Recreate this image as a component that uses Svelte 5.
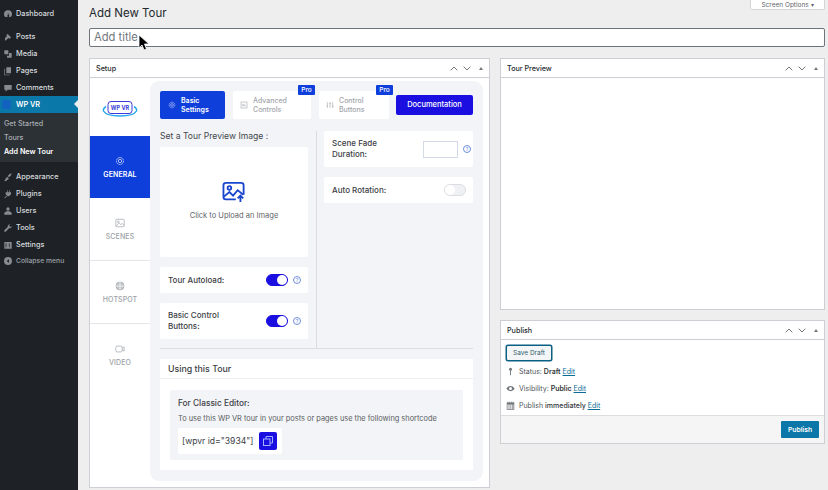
<script>
  const top = [
    { label: 'Posts', icon: 'M3 9l3-3-1-2 2-1 5 5-2 2-2-1-3 3-2 1z' },
    { label: 'Media', icon: 'M2 2h6v6H2zM9 6h4v7H6v-3h3z' },
    { label: 'Pages', icon: 'M5 2h7v9H5zM3 4v9h7v1H2V4z' },
    { label: 'Comments', icon: 'M2 3h11v7H7l-3 3v-3H2z' }
  ];
  const bottom = [
    { label: 'Appearance', icon: 'M2 13l4-6 3 3-5 4zM7 6l3-3 3-1-1 3-3 3z' },
    { label: 'Plugins', icon: 'M6 2h1v3h2V2h1v3h2v3l-3 3H7L4 8V5h2zM2 13l3-3 1 1-3 3z' },
    { label: 'Users', icon: 'M7.5 2a2.5 2.5 0 110 5 2.5 2.5 0 010-5zM2 13v-3l3-2h5l3 2v3z' },
    { label: 'Tools', icon: 'M13 4l-2 2-2-2 2-2a3.5 3.5 0 00-4 4L2 11v2h2l5-5a3.5 3.5 0 004-4z' },
    { label: 'Settings', icon: 'M2 3h11v10H2zM4 5v6h1V8h1V7H5V5zM9 5v2H8v1h1v3h1V5z' }
  ];
</script>

<div class="page">
  <nav class="menu">
    <a class="item first"><svg viewBox="0 0 15 15"><path d="M7.5 2a6 6 0 00-6 6c0 2 1 3.500 2 4h8c1-.5 2-2 2-4a6 6 0 00-6-6zm0 3.500L9 9.500a1.500 1.500 0 11-2 0z"/></svg>Dashboard</a>
    <div class="group">
      {#each top as m}
        <a class="item"><svg viewBox="0 0 15 15"><path d={m.icon}/></svg>{m.label}</a>
      {/each}
    </div>
    <a class="item current"><span class="vr-mark"></span>WP VR</a>
    <div class="sub">
      <a>Get Started</a>
      <a>Tours</a>
      <a class="on">Add New Tour</a>
    </div>
    <div class="group lower">
      {#each bottom as m}
        <a class="item"><svg viewBox="0 0 15 15"><path d={m.icon}/></svg>{m.label}</a>
      {/each}
    </div>
    <a class="item collapse"><svg viewBox="0 0 15 15"><path fill-rule="evenodd" d="M7.500 1.500a6 6 0 110 12 6 6 0 010-12zM9 5L5.500 7.500 9 10z"/></svg>Collapse menu</a>
  </nav>

  <main class="main">
    <div class="screen-tab">Screen Options <i>▾</i></div>
    <h1>Add New Tour</h1>
    <div class="title-input">Add title</div>

    <div class="cols">
      <section class="box setup">
        <header class="box-head"><b>Setup</b>
          <span class="ctrls">
            <svg viewBox="0 0 8 5"><path d="M.7 4.300L4 1l3.300 3.300"/></svg>
            <svg viewBox="0 0 8 5"><path d="M.7.7L4 4 7.300.7"/></svg>
            <em></em>
          </span>
        </header>
        <div class="setup-body">
          <aside class="side">
            <div class="logo">
              <svg viewBox="0 0 36 18" width="36" height="18">
                <path d="M4 6.500C1.500 8 1 9.500 1.500 11c2 3.500 9 5 16.500 5s14.500-1.500 16.500-5c.5-1.500 0-3-2.500-4.500" fill="none" stroke="#29a6ea" stroke-width="1.500"/>
                <rect x="6" y="1.500" width="24" height="12" rx="3" fill="#fff" stroke="#3a3ad8" stroke-width="1"/>
                <text x="18" y="10" text-anchor="middle" class="logo-t">WP VR</text>
              </svg>
            </div>
            <div class="tab active">
              <svg viewBox="0 0 12 12"><circle cx="6" cy="6" r="2"/><circle cx="6" cy="6" r="4.200" stroke-dasharray="2.200 .6"/></svg>
              GENERAL
            </div>
            <div class="tab">
              <svg viewBox="0 0 12 12"><rect x="1" y="1.500" width="10" height="9" rx="1"/><circle cx="4" cy="4.500" r="1"/><path d="M1.500 9.500L5 6l2 2 1.500-1.500L11 9"/></svg>
              SCENES
            </div>
            <div class="tab">
              <svg class="hot" viewBox="0 0 12 12"><circle cx="6" cy="6" r="4.800"/><circle class="hole" cx="6" cy="6" r="1.300"/><path class="hole" d="M6 1.200v2.500M6 8.300v2.500M1.200 6h2.500M8.300 6h2.500"/></svg>
              HOTSPOT
            </div>
            <div class="tab last">
              <svg viewBox="0 0 12 12"><rect x="1" y="2.500" width="7.500" height="7" rx="1.500"/><path d="M8.500 5L11 3.500v5L8.500 7"/></svg>
              VIDEO
            </div>
          </aside>

          <div class="panel">
            <div class="tabs">
              <div class="pill blue">
                <svg viewBox="0 0 12 12"><circle cx="6" cy="6" r="2"/><circle cx="6" cy="6" r="4.200" stroke-dasharray="2.200 .6"/></svg>
                <span>Basic<br />Settings</span>
              </div>
              <div class="pill off adv">
                <svg viewBox="0 0 12 12"><rect x="1.500" y="1.500" width="9" height="9"/><path d="M3 5h4M3 7h6"/></svg>
                <span>Advanced<br />Controls</span>
                <b class="pro">Pro</b>
              </div>
              <div class="pill off ctl">
                <svg viewBox="0 0 12 12"><path d="M2 1.500v9M6 1.500v9M10 1.500v9M.8 7h2.400M4.800 4h2.400M8.800 8h2.400"/></svg>
                <span>Control<br />Buttons</span>
                <b class="pro">Pro</b>
              </div>
              <div class="doc">Documentation</div>
            </div>

            <div class="split">
              <div class="left">
                <p class="lbl">Set a Tour Preview Image :</p>
                <div class="upload">
                  <svg viewBox="0 0 26 24" width="24" height="22">
                    <path d="M15 20H4a2.500 2.500 0 01-2.500-2.500v-13A2.500 2.500 0 014 2h17a2.500 2.500 0 012.500 2.500V15"/>
                    <circle cx="8" cy="7.500" r="2"/>
                    <path d="M2 17l6-5 4 4 5-6 6 5"/>
                    <path d="M20 23v-7M17 19l3-3 3 3"/>
                  </svg>
                  <span>Click to Upload an Image</span>
                </div>
                <div class="row single">
                  <span>Tour Autoload:</span>
                  <div class="right"><div class="switch on"></div><i class="help">?</i></div>
                </div>
                <div class="row double">
                  <span>Basic Control<br />Buttons:</span>
                  <div class="right"><div class="switch on"></div><i class="help">?</i></div>
                </div>
              </div>
              <div class="vline"></div>
              <div class="rightcol">
                <div class="row fade">
                  <span>Scene Fade<br />Duration:</span>
                  <div class="right"><div class="num"></div><i class="help">?</i></div>
                </div>
                <div class="row auto">
                  <span>Auto Rotation:</span>
                  <div class="switch"></div>
                </div>
              </div>
            </div>

            <div class="using">
              <h3>Using this Tour</h3>
              <div class="classic">
                <h4>For Classic Editor:</h4>
                <p>To use this WP VR tour in your posts or pages use the following shortcode</p>
                <div class="code">
                  <span>[wpvr id="3934"]</span>
                  <div class="copy">
                    <svg viewBox="0 0 12 12" width="12" height="12"><path d="M4 4V1.500h6.500V8H8"/><rect x="1.500" y="4" width="6.500" height="6.500"/></svg>
                  </div>
                </div>
              </div>
            </div>
          </div>
        </div>
      </section>

      <div class="rail">
        <section class="box preview">
          <header class="box-head"><b>Tour Preview</b>
            <span class="ctrls">
              <svg viewBox="0 0 8 5"><path d="M.7 4.300L4 1l3.300 3.300"/></svg>
              <svg viewBox="0 0 8 5"><path d="M.7.7L4 4 7.300.7"/></svg>
              <em></em>
            </span>
          </header>
        </section>
        <section class="box publish">
          <header class="box-head"><b>Publish</b>
            <span class="ctrls">
              <svg viewBox="0 0 8 5"><path d="M.7 4.300L4 1l3.300 3.300"/></svg>
              <svg viewBox="0 0 8 5"><path d="M.7.7L4 4 7.300.7"/></svg>
              <em></em>
            </span>
          </header>
          <div class="pub-body">
            <div class="save">Save Draft</div>
            <div class="meta"><svg viewBox="0 0 12 12"><circle cx="6" cy="3" r="2"/><rect x="5.400" y="4" width="1.200" height="7"/></svg><span>Status: <b>Draft</b> <u>Edit</u></span></div>
            <div class="meta"><svg viewBox="0 0 12 12"><path fill-rule="evenodd" d="M.5 6C2 3.500 4 2.500 6 2.500S10 3.500 11.500 6C10 8.500 8 9.500 6 9.500S2 8.500.5 6zM6 4a2 2 0 100 4 2 2 0 000-4z"/></svg><span>Visibility: <b>Public</b> <u>Edit</u></span></div>
            <div class="meta"><svg viewBox="0 0 12 12"><path fill-rule="evenodd" d="M1 2h1V1h1v1h1V1h1v1h2V1h1v1h1V1h1v1h1v9.500H1zM2 4.500v6h1.500v-6zM4.500 4.500v6H6v-6zM7 4.500v6h1.500v-6zM9.500 4.500v6H10v-6z"/></svg><span>Publish <b class="thin">immediately</b> <u>Edit</u></span></div>
          </div>
          <footer class="pub-foot"><div class="publish-btn">Publish</div></footer>
        </section>
      </div>
    </div>
  </main>

  <svg class="cursor" viewBox="0 0 12 18" width="12" height="18">
    <path d="M1 1v13l3-3 2 5 2.500-1-2-5H11z" fill="#000" stroke="#fff" stroke-width=".8"/>
  </svg>
</div>

<style>
  :global(body) { margin: 0; background: #eeeeee; }
  .page {
    position: relative; display: flex; width: 828px; height: 490px; overflow: hidden;
    font-family: Inter, "Liberation Sans", sans-serif; color: #32373c; background: #eeeeee;
  }
  .menu {
    width: 78px; flex: none; background: #1e2227; padding-top: 5px; box-sizing: border-box;
    font-size: 7.300px; font-weight: 500; color: #d6d9dc;
  }
  .item { display: flex; align-items: center; gap: 3px; height: 17px; padding-left: 3px; }
  .item svg { width: 10px; height: 10px; fill: #868b90; flex: none; }
  .first { margin-bottom: 6px; }
  .current {
    position: relative; background: #0a78a8; color: #fff; font-weight: 600; height: 17px; padding-left: 16px; gap: 0;
  }
  .current::after {
    content: ""; position: absolute; right: 0; top: 4px;
    border: 4.500px solid transparent; border-right-color: #eeeeee; border-left: 0;
  }
  .vr-mark { position: absolute; left: 2px; top: 4px; width: 9px; height: 9px; background: #1262c0; border-radius: 2px; }
  .sub {
    background: #2c3136; height: 49px; padding: 4px 0 0 4px; box-sizing: border-box;
    display: flex; flex-direction: column; font-size: 7.200px; color: #a9adb2;
  }
  .sub a { height: 14px; line-height: 14px; }
  .sub .on { color: #fff; font-weight: 600; }
  .lower { padding-top: 6px; }
  .collapse { color: #9ca1a6; font-size: 6.800px; height: 15px; }

  .main { flex: 1; padding: 0 3px 0 11px; position: relative; min-width: 0; }
  .screen-tab {
    position: absolute; right: 3px; top: 0; width: 75px; height: 10px; box-sizing: border-box;
    background: #fff; border: 1px solid #d5d5d5; border-top: 0; border-radius: 0 0 2px 2px;
    font-size: 6.500px; line-height: 9px; color: #5f6469; text-align: center;
  }
  .screen-tab i { font-style: normal; font-size: 6px; }
  h1 { margin: 0; font-size: 11.500px; font-weight: 400; line-height: 15px; padding-top: 6px; height: 28px; box-sizing: border-box; color: #23282d; }
  .title-input {
    height: 19px; box-sizing: border-box; background: #fff; border: 1px solid #6e747b; border-radius: 2px;
    padding-left: 4px; font-size: 11.200px; line-height: 17px; color: #72777c;
  }
  .cols { display: flex; gap: 10px; margin-top: 11px; align-items: flex-start; }
  .box { background: #fff; border: 1px solid #ccd0d4; box-sizing: border-box; }
  .box-head {
    display: flex; align-items: center; justify-content: space-between; height: 19px; box-sizing: border-box;
    border-bottom: 1px solid #ccd0d4; padding: 0 6px 0 6px; font-size: 7.200px;
  }
  .box-head b { font-weight: 500; color: #23282d; }
  .ctrls { display: flex; align-items: center; gap: 5px; }
  .ctrls svg { width: 8px; height: 5px; fill: none; stroke: #72777c; stroke-width: 1; }
  .ctrls em { width: 0; height: 0; margin-left: 3px; border: 2.200px solid transparent; border-bottom: 3px solid #72777c; border-top: 0; }

  .setup { width: 401px; height: 430px; flex: none; }
  .setup-body { display: flex; }
  .side { width: 60px; flex: none; }
  .logo { height: 58px; display: flex; align-items: center; justify-content: center; padding-top: 3px; box-sizing: border-box; }
  .logo-t { font: 700 5.500px Inter, sans-serif; fill: #3a3ad8; }
  .tab {
    height: 63px; box-sizing: border-box; display: flex; flex-direction: column; align-items: center; justify-content: center;
    gap: 4px; font-size: 7px; font-weight: 500; color: #9ca1a7; border-bottom: 1px solid #e4e6ea; letter-spacing: .1px;
  }
  .tab svg { width: 10px; height: 10px; fill: none; stroke: #a4a8ae; stroke-width: .9; }
  .tab svg.hot { fill: #c4c7cc; }
  .tab svg.hot .hole { stroke: #fff; fill: none; }
  .tab.active { height: 62px; background: #0f3fdb; color: #fff; font-weight: 600; border: 0; }
  .tab.active svg { stroke: #dfe6ff; }
  .tab.last { border: 0; }

  .panel {
    width: 333px; height: 400px; margin-top: 3px; box-sizing: border-box; padding: 10px 10px 10px;
    background: #f3f4f7; border-radius: 9px;
  }
  .tabs { display: flex; align-items: center; gap: 8px; height: 28px; }
  .pill {
    position: relative; height: 28px; box-sizing: border-box; display: flex; align-items: center; gap: 5px;
    border-radius: 2px; font-size: 7px; line-height: 9px; font-weight: 500;
  }
  .pill svg { width: 8px; height: 8px; fill: none; stroke-width: .9; flex: none; }
  .pill.blue { width: 65px; background: #0f3fdb; color: #fff; padding-left: 8px; font-weight: 600; }
  .pill.blue svg { stroke: #cfd9ff; }
  .pill.off { background: #fff; color: #a2a6ac; }
  .pill.off svg { stroke: #a2a6ac; }
  .adv { width: 78px; padding-left: 7px; }
  .ctl { width: 70px; padding-left: 7px; }
  .pro {
    position: absolute; top: -6px; right: -4px; width: 17px; height: 10px; background: #0f3fdb; color: #fff;
    font-size: 6.500px; line-height: 10px; text-align: center; font-weight: 500; border-radius: 1px;
  }
  .doc {
    width: 77px; height: 20px; margin-left: -1px; background: #1a0fe0; color: #fff; border-radius: 2px;
    font-size: 7.500px; font-weight: 500; line-height: 20px; text-align: center;
  }
  .split { display: flex; margin-top: 12px; height: 218px; }
  .left { width: 148px; flex: none; }
  .lbl { margin: 0; font-size: 8.600px; line-height: 11px; height: 16px; color: #44484d; }
  .upload {
    height: 110px; background: #fff; border-radius: 2px; display: flex; flex-direction: column; align-items: center;
    justify-content: center; gap: 8px; font-size: 7.500px; color: #5f6469; padding-bottom: 4px; box-sizing: border-box;
  }
  .upload svg { fill: none; stroke: #1a45cf; stroke-width: 2; }
  .row {
    display: flex; align-items: center; justify-content: space-between; background: #fff; border-radius: 2px;
    box-sizing: border-box; padding: 0 7px 0 8px; font-size: 8px; line-height: 11px; color: #3c4045; font-weight: 500;
  }
  .single { height: 26px; margin-top: 10px; }
  .double { height: 36px; margin-top: 10px; }
  .right { display: flex; align-items: center; gap: 5px; }
  .switch { position: relative; width: 22px; height: 12px; border-radius: 6px; background: #f0f1f4; border: 1px solid #dcdee3; box-sizing: border-box; }
  .switch::after { content: ""; position: absolute; left: 0; top: 0; width: 10px; height: 10px; border-radius: 50%; background: #fff; }
  .switch.on { background: #1a0fe0; border-color: #1a0fe0; }
  .switch.on::after { left: 10px; }
  .help {
    width: 8px; height: 8px; border: .8px solid #6f8fdc; border-radius: 50%; box-sizing: border-box; font-size: 5px;
    line-height: 6px; text-align: center; font-style: normal; color: #6f8fdc; margin-top: -1px;
  }
  .vline { width: 1px; background: #dcdde2; margin-left: 8px; flex: none; }
  .rightcol { margin-left: 7px; width: 149px; }
  .fade { height: 36px; padding-right: 2px; }
  .num { width: 35px; height: 17px; box-sizing: border-box; background: #fff; border: 1px solid #d4d9e6; }
  .auto { height: 26px; margin-top: 10px; padding-right: 7px; }
  .using { margin-top: 10px; height: 111px; background: #fff; border-top: 0; position: relative; }
  .using::before { content: ""; position: absolute; left: 0; right: 0; top: -11px; height: 1px; background: #dcdde2; }
  .using h3 {
    margin: 0; height: 20px; padding-left: 8px; box-sizing: border-box; font-size: 8.800px; line-height: 20px; font-weight: 500;
    color: #3c4045; border-bottom: 1px solid #eceef2;
  }
  .classic { margin: 11px 10px 0; height: 70px; background: #f3f4f7; border-radius: 2px; padding: 8px 8px 0; box-sizing: border-box; }
  .classic h4 { margin: 0; font-size: 8.300px; line-height: 10px; font-weight: 500; color: #3c4045; }
  .classic p { margin: 6px 0 0; font-size: 7.400px; line-height: 9px; color: #5a5e63; white-space: nowrap; }
  .code {
    display: flex; align-items: center; justify-content: space-between; width: 104px; height: 26px; margin-top: 5px;
    box-sizing: border-box; background: #fff; border-radius: 2px; padding: 0 5px 0 4px; font-size: 8.600px; color: #3c4045;
  }
  .copy { width: 18px; height: 18px; background: #1a0fe0; border-radius: 2px; display: flex; align-items: center; justify-content: center; flex: none; }
  .copy svg { fill: none; stroke: #9fb2ff; stroke-width: 1; }

  .rail { width: 325px; flex: none; display: flex; flex-direction: column; gap: 10px; }
  .preview { height: 252px; }
  .publish { height: 124px; }
  .pub-body { height: 75px; padding: 5px 5px 0; box-sizing: border-box; position: relative; }
  .save {
    width: 46px; height: 16px; box-sizing: border-box; border: 1px solid #0a5f85; border-radius: 2px; background: #f3f5f6;
    box-shadow: 0 0 0 .5px #0a5f85; font-size: 6.500px; line-height: 14px; text-align: center; color: #32606f;
  }
  .meta { display: flex; align-items: center; height: 17px; font-size: 7px; color: #50555a; white-space: pre; }
  .save + .meta { margin-top: 2px; }
  .meta svg { width: 9px; height: 9px; fill: #72777c; margin-right: 4px; flex: none; }
  .meta b { font-weight: 600; color: #32373c; }
  .meta b.thin { font-weight: 500; }
  .meta u { color: #0a6c97; }
  .pub-foot {
    height: 28px; box-sizing: border-box; background: #f5f5f5; border-top: 1px solid #ddd; display: flex;
    justify-content: flex-end; align-items: center; padding-right: 5px;
  }
  .publish-btn {
    width: 38px; height: 17px; background: #0a77a8; color: #fff; border-radius: 1px; font-size: 6.800px; font-weight: 600;
    line-height: 17px; text-align: center;
  }
  .cursor { position: absolute; left: 138px; top: 34px; }
</style>
